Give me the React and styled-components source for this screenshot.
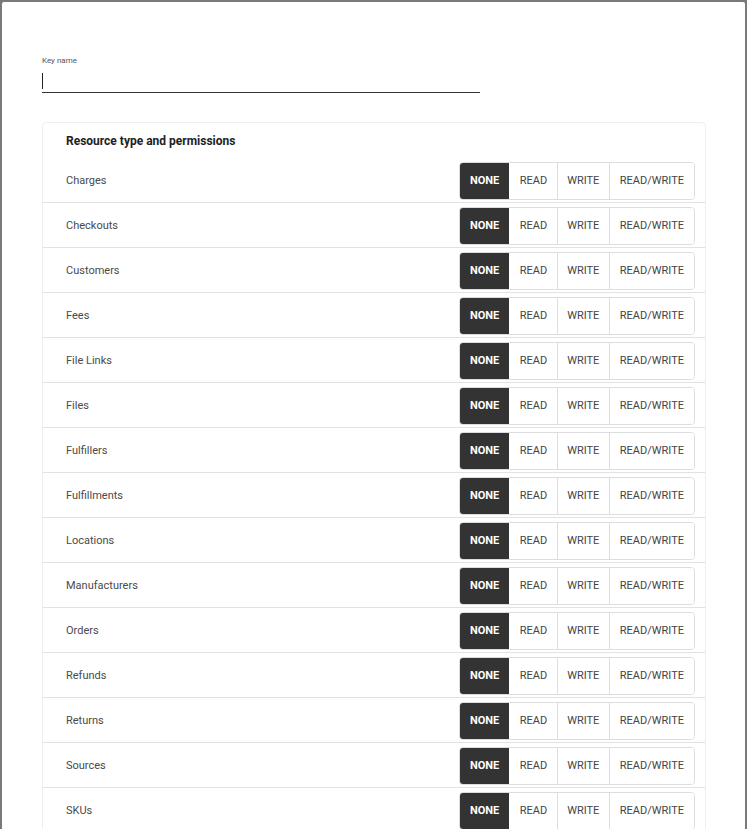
import React from "react";
import styled, { createGlobalStyle } from "styled-components";

const Global = createGlobalStyle`
  html, body { margin: 0; padding: 0; overflow: hidden; background: #7a7a7a; }
  body { font-family: Roboto, "Noto Sans", Arial, sans-serif; }
  * { box-sizing: border-box; }
`;

const Backdrop = styled.div`
  height: 829px;
  padding: 2px 2px 0 2px;
  overflow: hidden;
`;

const Modal = styled.div`
  background: #fff;
  min-height: 100%;
  padding: 54px 39px 40px 40px;
  border-radius: 2px 2px 0 0;
`;

const FieldLabel = styled.div`
  font-size: 8px;
  line-height: 10px;
  color: #555;
`;

const Field = styled.div`
  width: 438px;
  height: 22px;
  margin-top: 5px;
  border-bottom: 1px solid #333;
  display: flex;
  align-items: flex-start;
  padding-top: 2px;
`;

const Caret = styled.span`
  display: block;
  width: 1px;
  height: 16px;
  background: #222;
`;

const Card = styled.div`
  margin-top: 29px;
  border: 1px solid #eeeeee;
  border-radius: 4px;
  background: #fff;
`;

const CardTitle = styled.div`
  height: 35px;
  padding: 0 23px;
  display: flex;
  align-items: center;
  font-size: 12px;
  font-weight: 700;
  color: #222;
`;

const Row = styled.div`
  height: 45px;
  display: flex;
  align-items: center;
  justify-content: space-between;
  padding: 0 10px 0 23px;
  border-bottom: 1px solid #e2e2e2;
`;

const RowLabel = styled.span`
  font-size: 11px;
  color: #4a4a4a;
`;

const Group = styled.div`
  display: flex;
  height: 38px;
  border: 1px solid #dddddd;
  border-radius: 4px;
  overflow: hidden;
  margin-top: 1px;
`;

const Segment = styled.button`
  font-family: Roboto, "Noto Sans", Arial, sans-serif;
  font-size: 11px;
  padding: 0 ${(p) => p.$pad}px;
  border: none;
  border-left: 1px solid ${(p) => (p.$sep ? "#dddddd" : "transparent")};
  background: ${(p) => (p.$active ? "#333333" : "#ffffff")};
  color: ${(p) => (p.$active ? "#ffffff" : "#444")};
  font-weight: ${(p) => (p.$active ? 700 : 400)};
  cursor: pointer;
  &:first-child { border-left: none; }
`;

const resources = [
  "Charges",
  "Checkouts",
  "Customers",
  "Fees",
  "File Links",
  "Files",
  "Fulfillers",
  "Fulfillments",
  "Locations",
  "Manufacturers",
  "Orders",
  "Refunds",
  "Returns",
  "Sources",
  "SKUs",
];

const options = [
  { label: "NONE", pad: 10 },
  { label: "READ", pad: 9.5 },
  { label: "WRITE", pad: 9.5 },
  { label: "READ/WRITE", pad: 10 },
];

export default function App() {
  return (
    <>
      <Global />
      <Backdrop>
        <Modal>
          <FieldLabel>Key name</FieldLabel>
          <Field>
            <Caret />
          </Field>
          <Card>
            <CardTitle>Resource type and permissions</CardTitle>
            {resources.map((r) => (
              <Row key={r}>
                <RowLabel>{r}</RowLabel>
                <Group>
                  {options.map((o, i) => (
                    <Segment key={o.label} $active={i === 0} $sep={i > 1} $pad={o.pad}>
                      {o.label}
                    </Segment>
                  ))}
                </Group>
              </Row>
            ))}
          </Card>
        </Modal>
      </Backdrop>
    </>
  );
}
